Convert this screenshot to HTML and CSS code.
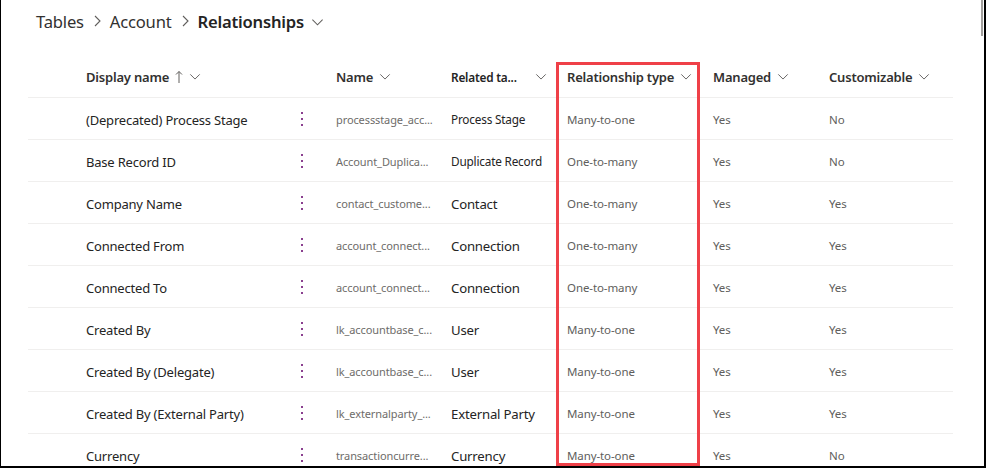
FILE: index.html
```html
<!DOCTYPE html>
<html>
<head>
<meta charset="utf-8">
<link rel="stylesheet" href="styles.css">
</head>
<body>
<div class="frame">
  <div class="crumbs">
    <span class="crumb">Tables</span>
    <svg class="sep" viewBox="0 0 10 14"><path d="M3 2 L8 7 L3 12" fill="none" stroke="#605e5c" stroke-width="1.1"/></svg>
    <span class="crumb">Account</span>
    <svg class="sep" viewBox="0 0 10 14"><path d="M3 2 L8 7 L3 12" fill="none" stroke="#605e5c" stroke-width="1.1"/></svg>
    <span class="crumb current">Relationships</span>
    <svg class="down big" viewBox="0 0 14 10"><path d="M1.5 2.5 L7 8 L12.5 2.5" fill="none" stroke="#605e5c" stroke-width="1.1"/></svg>
  </div>

  <div class="table">
    <div class="row head">
      <div class="c sel"></div>
      <div class="c dn">Display name<svg class="arrow" viewBox="0 0 8 14"><path d="M4 13 V1.5 M1 4.5 L4 1.5 L7 4.5" fill="none" stroke="#605e5c" stroke-width="1"/></svg><svg class="down" viewBox="0 0 14 10"><path d="M1.5 2.5 L7 8 L12.5 2.5" fill="none" stroke="#605e5c" stroke-width="1.1"/></svg></div>
      <div class="c more"></div>
      <div class="c nm">Name<svg class="down" viewBox="0 0 14 10"><path d="M1.5 2.5 L7 8 L12.5 2.5" fill="none" stroke="#605e5c" stroke-width="1.1"/></svg></div>
      <div class="c rt split">Related ta...<svg class="down" viewBox="0 0 14 10"><path d="M1.5 2.5 L7 8 L12.5 2.5" fill="none" stroke="#605e5c" stroke-width="1.1"/></svg></div>
      <div class="c ty">Relationship type<svg class="down" viewBox="0 0 14 10"><path d="M1.5 2.5 L7 8 L12.5 2.5" fill="none" stroke="#605e5c" stroke-width="1.1"/></svg></div>
      <div class="c mg">Managed<svg class="down" viewBox="0 0 14 10"><path d="M1.5 2.5 L7 8 L12.5 2.5" fill="none" stroke="#605e5c" stroke-width="1.1"/></svg></div>
      <div class="c cu">Customizable<svg class="down" viewBox="0 0 14 10"><path d="M1.5 2.5 L7 8 L12.5 2.5" fill="none" stroke="#605e5c" stroke-width="1.1"/></svg></div>
    </div>

    <div class="row"><div class="c sel"></div><div class="c dn">(Deprecated) Process Stage</div><div class="c more"><span class="dots"><i></i><i></i><i></i></span></div><div class="c nm small">processstage_acc...</div><div class="c rt">Process Stage</div><div class="c ty small">Many-to-one</div><div class="c mg small">Yes</div><div class="c cu small">No</div></div>
    <div class="row"><div class="c sel"></div><div class="c dn">Base Record ID</div><div class="c more"><span class="dots"><i></i><i></i><i></i></span></div><div class="c nm small">Account_Duplica...</div><div class="c rt">Duplicate Record</div><div class="c ty small">One-to-many</div><div class="c mg small">Yes</div><div class="c cu small">No</div></div>
    <div class="row"><div class="c sel"></div><div class="c dn">Company Name</div><div class="c more"><span class="dots"><i></i><i></i><i></i></span></div><div class="c nm small">contact_custome...</div><div class="c rt lg">Contact</div><div class="c ty small">One-to-many</div><div class="c mg small">Yes</div><div class="c cu small">Yes</div></div>
    <div class="row"><div class="c sel"></div><div class="c dn">Connected From</div><div class="c more"><span class="dots"><i></i><i></i><i></i></span></div><div class="c nm small">account_connect...</div><div class="c rt lg">Connection</div><div class="c ty small">One-to-many</div><div class="c mg small">Yes</div><div class="c cu small">Yes</div></div>
    <div class="row"><div class="c sel"></div><div class="c dn">Connected To</div><div class="c more"><span class="dots"><i></i><i></i><i></i></span></div><div class="c nm small">account_connect...</div><div class="c rt lg">Connection</div><div class="c ty small">One-to-many</div><div class="c mg small">Yes</div><div class="c cu small">Yes</div></div>
    <div class="row"><div class="c sel"></div><div class="c dn">Created By</div><div class="c more"><span class="dots"><i></i><i></i><i></i></span></div><div class="c nm small">lk_accountbase_c...</div><div class="c rt lg">User</div><div class="c ty small">Many-to-one</div><div class="c mg small">Yes</div><div class="c cu small">Yes</div></div>
    <div class="row"><div class="c sel"></div><div class="c dn">Created By (Delegate)</div><div class="c more"><span class="dots"><i></i><i></i><i></i></span></div><div class="c nm small">lk_accountbase_c...</div><div class="c rt lg">User</div><div class="c ty small">Many-to-one</div><div class="c mg small">Yes</div><div class="c cu small">Yes</div></div>
    <div class="row"><div class="c sel"></div><div class="c dn">Created By (External Party)</div><div class="c more"><span class="dots"><i></i><i></i><i></i></span></div><div class="c nm small">lk_externalparty_...</div><div class="c rt lg">External Party</div><div class="c ty small">Many-to-one</div><div class="c mg small">Yes</div><div class="c cu small">Yes</div></div>
    <div class="row"><div class="c sel"></div><div class="c dn">Currency</div><div class="c more"><span class="dots"><i></i><i></i><i></i></span></div><div class="c nm small">transactioncurre...</div><div class="c rt lg">Currency</div><div class="c ty small">Many-to-one</div><div class="c mg small">Yes</div><div class="c cu small">No</div></div>

    <div class="highlight"></div>
  </div>
  <div class="thumb"></div>
</div>
</body>
</html>
```

FILE: styles.css
```css
html, body {
  margin: 0;
  padding: 0;
  background: #fff;
}
body {
  width: 986px;
  height: 468px;
  overflow: hidden;
  font-family: "Segoe UI", "Noto Sans", "Open Sans", sans-serif;
  color: #242424;
}
.frame {
  position: relative;
  box-sizing: border-box;
  width: 986px;
  height: 468px;
  border-left: 1px solid #000;
  border-right: 2px solid #000;
  border-bottom: 2px solid #000;
  overflow: hidden;
}
.crumbs {
  display: flex;
  align-items: center;
  height: 42px;
  padding-left: 35px;
  font-size: 16.6px;
  color: #323130;
  letter-spacing: -0.2px;
}
.crumb.current {
  font-weight: 600;
  color: #242424;
}
.sep {
  width: 10px;
  height: 14px;
  margin: 0 8px 0 8px;
}
.down {
  width: 12px;
  height: 9px;
  margin-left: 6px;
  flex: none;
}
.down.big {
  width: 13px;
  height: 10px;
  margin-left: 7px;
  margin-top: 1px;
}
.table {
  position: relative;
  margin-left: 27px;
  width: 925px;
  margin-top: 14px;
}
.row {
  box-sizing: border-box;
  display: grid;
  grid-template-columns: 48px 214px 36px 115px 116px 146px 116px 134px;
  height: 42px;
  border-bottom: 1px solid #f0efee;
  align-items: center;
}
.row.head {
  height: 42px;
}
.c {
  padding-left: 10px;
  font-size: 13px;
  white-space: nowrap;
  overflow: hidden;
  display: flex;
  align-items: center;
  letter-spacing: -0.2px;
}
.head .c {
  font-weight: 600;
  color: #323130;
  font-size: 13px;
}
.head .c.split {
  justify-content: space-between;
  padding-right: 10px;
}
.c.sel, .c.more {
  padding-left: 0;
}
.arrow {
  width: 8px;
  height: 14px;
  margin-left: 6px;
  flex: none;
}
.c.small {
  font-size: 11.5px;
  color: #605e5c;
  letter-spacing: -0.1px;
}
.c.nm.small {
  font-size: 11px;
  color: #6e6c6a;
}
.c.rt {
  font-size: 11.8px;
  color: #242424;
}
.c.rt.lg {
  font-size: 13.2px;
}
.row:not(.head) .c {
  padding-top: 1px;
}
.row:not(.head) .c.rt.lg, .row:not(.head) .c.dn {
  padding-top: 3px;
}
.dots {
  display: flex;
  flex-direction: column;
  gap: 4px;
  margin-left: 11px;
}
.dots i {
  display: block;
  width: 2px;
  height: 2px;
  background: #8a3f8f;
}
.highlight {
  position: absolute;
  left: 528px;
  top: 6px;
  width: 138px;
  height: 398px;
  border: 3px solid #ef4048;
  pointer-events: none;
}
.thumb {
  position: absolute;
  right: 1px;
  top: 0;
  width: 2px;
  height: 36px;
  background: #a19f9d;
}
```
